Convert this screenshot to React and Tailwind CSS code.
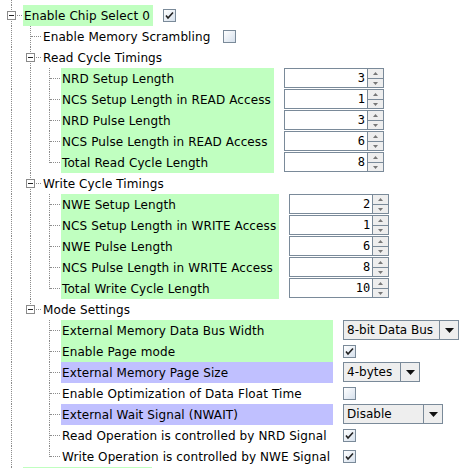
import { Fragment } from 'react'

const check = (on) => ({ type: 'check', on })
const spin = (value) => ({ type: 'spin', value })
const combo = (value, width) => ({ type: 'combo', value, width })

const tree = [
  {
    label: 'Enable Chip Select 0',
    hl: 'green',
    editor: check(true),
    children: [
      { label: 'Enable Memory Scrambling', editor: check(false) },
      {
        label: 'Read Cycle Timings',
        children: [
          { label: 'NRD Setup Length', hl: 'green', editor: spin(3) },
          { label: 'NCS Setup Length in READ Access', hl: 'green', editor: spin(1) },
          { label: 'NRD Pulse Length', hl: 'green', editor: spin(3) },
          { label: 'NCS Pulse Length in READ Access', hl: 'green', editor: spin(6) },
          { label: 'Total Read Cycle Length', hl: 'green', editor: spin(8) }
        ]
      },
      {
        label: 'Write Cycle Timings',
        children: [
          { label: 'NWE Setup Length', hl: 'green', editor: spin(2) },
          { label: 'NCS Setup Length in WRITE Access', hl: 'green', editor: spin(1) },
          { label: 'NWE Pulse Length', hl: 'green', editor: spin(6) },
          { label: 'NCS Pulse Length in WRITE Access', hl: 'green', editor: spin(8) },
          { label: 'Total Write Cycle Length', hl: 'green', editor: spin(10) }
        ]
      },
      {
        label: 'Mode Settings',
        children: [
          { label: 'External Memory Data Bus Width', hl: 'green', editor: combo('8-bit Data Bus', 'w-[116px]') },
          { label: 'Enable Page mode', hl: 'green', editor: check(true) },
          { label: 'External Memory Page Size', hl: 'purple', editor: combo('4-bytes', 'w-[77px]') },
          { label: 'Enable Optimization of Data Float Time', editor: check(false) },
          { label: 'External Wait Signal (NWAIT)', hl: 'purple', editor: combo('Disable', 'w-[100px]') },
          { label: 'Read Operation is controlled by NRD Signal', editor: check(true) },
          { label: 'Write Operation is controlled by NWE Signal', editor: check(true) }
        ]
      }
    ]
  },
  // next chip select row, only its top pixel shows at the bottom edge
  { label: '', hl: 'green', width: 'w-[129px]', children: [] }
]

const CheckBox = ({ on }) => (
  <div className="mt-[4px] flex h-[13px] w-[13px] items-center justify-center border border-[#7a8a99] bg-gradient-to-br from-white to-[#d6e0ec]">
    {on ? (
      <svg width="9" height="9" viewBox="0 0 9 9">
        <path d="M1 4.5 L3 7 L8 1.5" fill="none" stroke="#222" strokeWidth="1.6" />
      </svg>
    ) : null}
  </div>
)

const Spinner = ({ value }) => (
  <div className="flex h-[20px] w-[100px]">
    <div className="flex-1 border border-[#7a8a99] bg-white pr-[2px] text-right font-['DejaVu_Sans_Mono',monospace] text-[12px] leading-[18px] shadow-[inset_0_-1px_0_#ffffff]">
      {value}
    </div>
    <div className="flex w-[16px] flex-col">
      <div className="flex h-[10px] items-center justify-center border border-b-0 border-l-0 border-[#7a8a99] bg-[#eeeeee]">
        <svg width="5" height="3" viewBox="0 0 5 3">
          <polygon points="2.5,0 5,3 0,3" fill="#777" />
        </svg>
      </div>
      <div className="flex h-[10px] items-center justify-center border border-l-0 border-[#7a8a99] bg-[#eeeeee]">
        <svg width="5" height="3" viewBox="0 0 5 3">
          <polygon points="0,0 5,0 2.5,3" fill="#777" />
        </svg>
      </div>
    </div>
  </div>
)

const Combo = ({ value, width }) => (
  <div className={`flex h-[20px] ${width} border border-[#7a8a99] bg-[#eeeeee]`}>
    <div className="flex-1 truncate pl-[3px] text-[12px] leading-[18px]">{value}</div>
    <div className="flex w-[19px] items-center justify-center border-l border-[#7a8a99]">
      <svg width="9" height="5" viewBox="0 0 9 5">
        <polygon points="0,0 9,0 4.5,5" fill="#111" />
      </svg>
    </div>
  </div>
)

const Editor = ({ editor }) => {
  if (!editor) return null
  if (editor.type === 'check') return <CheckBox on={editor.on} />
  if (editor.type === 'spin') return <Spinner value={editor.value} />
  return <Combo value={editor.value} width={editor.width} />
}

const Gutter = ({ guides, last, expander }) => (
  <div className="flex h-[21px]">
    {guides.map((g, i) => (
      <div key={i} className="relative h-full w-[19px]">
        {g ? <div className="absolute left-[11px] top-0 h-full border-l border-dotted border-[#8c8c8c]" /> : null}
      </div>
    ))}
    <div className="relative h-full w-[23px]">
      <div
        className={`absolute left-[11px] top-0 border-l border-dotted border-[#8c8c8c] ${last ? 'h-[11px]' : 'h-full'}`}
      />
      <div className="absolute left-[12px] top-[10px] w-[10px] border-t border-dotted border-[#8c8c8c]" />
      {expander ? (
        <div className="absolute left-[7px] top-[6px] flex h-[9px] w-[9px] items-center justify-center border border-[#8a8a8a] bg-white">
          <div className="h-px w-[5px] bg-[#222]" />
        </div>
      ) : null}
    </div>
  </div>
)

const highlight = {
  green: 'bg-[#c0ffc0]',
  purple: 'bg-[#c0c0ff]'
}

const Group = ({ nodes, guides }) => (
  <div className="grid grid-cols-[max-content_max-content_1fr]">
    {nodes.map((node, i) => {
      const last = i === nodes.length - 1
      return (
        <Fragment key={node.label || i}>
          <Gutter guides={guides} last={last} expander={!!node.children} />
          <div
            className={`flex h-[21px] items-center pl-[1px] pr-[3px] tracking-[0.1px] ${highlight[node.hl] || ''} ${node.width || ''}`}
          >
            {node.label}
          </div>
          <div className="flex h-[21px] items-start pl-[10px]">
            <Editor editor={node.editor} />
          </div>
          {node.children && node.children.length ? (
            <div className="col-span-3">
              <Group nodes={node.children} guides={[...guides, !last]} />
            </div>
          ) : null}
        </Fragment>
      )
    })}
  </div>
)

const App = () => {
  return (
    <div className="h-[468px] w-[473px] overflow-hidden bg-white font-['DejaVu_Sans',sans-serif] text-[12px] text-black">
      <div className="relative h-[5px] w-[19px]">
        <div className="absolute left-[11px] top-0 h-full border-l border-dotted border-[#8c8c8c]" />
      </div>
      <Group nodes={tree} guides={[]} />
    </div>
  )
}

export default App
